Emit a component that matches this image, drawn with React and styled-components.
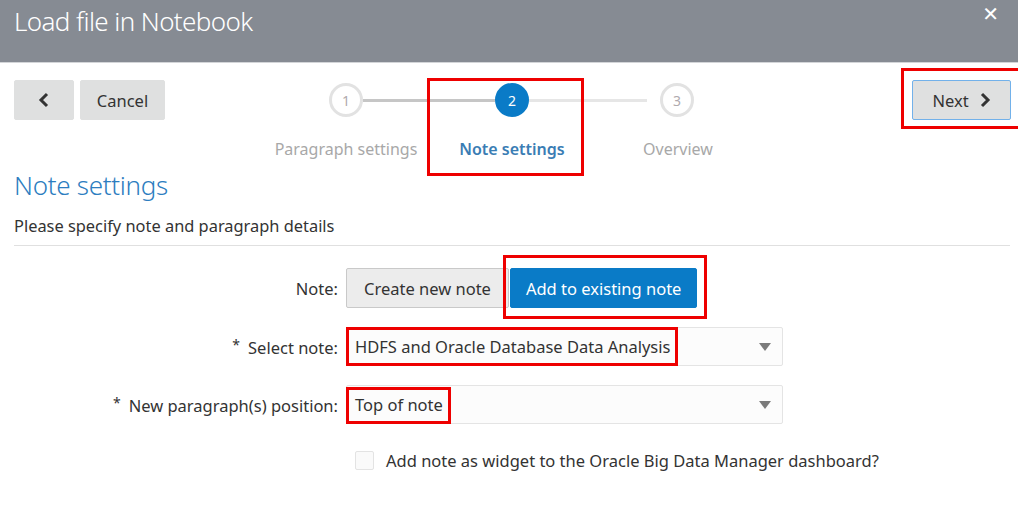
import React from "react";
import styled, { createGlobalStyle } from "styled-components";

const GlobalStyle = createGlobalStyle`
  html, body {
    margin: 0;
    padding: 0;
    background: #ffffff;
  }
  body {
    font-family: "Noto Sans", "Open Sans", Arial, sans-serif;
    color: #333333;
    width: 1018px;
    height: 513px;
    overflow: hidden;
  }
`;

const Dialog = styled.div`
  width: 1018px;
  height: 513px;
  background: #ffffff;
`;

const Header = styled.header`
  height: 63px;
  background: #868b93;
  border-bottom: 1px solid #d3d5d8;
  display: flex;
  align-items: flex-start;
  justify-content: space-between;
  padding: 3px 19px 0 14px;
  box-sizing: border-box;
`;

const Title = styled.h1`
  margin: 0;
  font-size: 26px;
  font-weight: 300;
  letter-spacing: -0.6px;
  color: #ffffff;
  line-height: 36px;
`;

const CloseButton = styled.span`
  color: #ffffff;
  font-size: 20px;
  font-weight: 700;
  line-height: 22px;
  font-family: "DejaVu Sans", sans-serif;
`;

const Toolbar = styled.div`
  display: grid;
  grid-template-columns: 1fr auto 1fr;
  align-items: start;
  margin-top: 17px;
`;

const ToolGroup = styled.div`
  display: flex;
  gap: 6px;
  padding: ${(p) => (p.$right ? "0 7px 0 0" : "0 0 0 14px")};
  justify-self: ${(p) => (p.$right ? "end" : "start")};
`;

const GreyButton = styled.button`
  position: relative;
  height: 40px;
  width: ${(p) => p.$w}px;
  display: flex;
  align-items: center;
  justify-content: center;
  gap: 10px;
  background: #dfe0e0;
  border: 1px solid ${(p) => (p.$focus ? "#72b1ea" : "#dfe0e0")};
  border-radius: 2px;
  font-family: inherit;
  font-size: 16.5px;
  color: #333333;
  padding: 0;
`;

const Stepper = styled.div`
  display: flex;
  flex-direction: column;
  margin-left: 6px;
`;

const Track = styled.div`
  display: flex;
  align-items: center;
  padding: 3px 0 0 66px;
  height: 34px;
`;

const Circle = styled.div`
  width: 34px;
  height: 34px;
  border-radius: 50%;
  box-sizing: border-box;
  border: 3px solid ${(p) => (p.$active ? "#0a7bc7" : "#e2e2e2")};
  background: ${(p) => (p.$active ? "#0a7bc7" : "#ffffff")};
  color: ${(p) => (p.$active ? "#ffffff" : "#b0aaae")};
  font-size: 14px;
  display: flex;
  align-items: center;
  justify-content: center;
  flex-shrink: 0;
`;

const Connector = styled.div`
  height: 3px;
  width: ${(p) => p.$w}px;
  margin-right: ${(p) => p.$gap || 0}px;
  background: ${(p) => (p.$done ? "#c6c6c6" : "#e6e6e6")};
`;

const Labels = styled.div`
  display: flex;
`;

const StepLabel = styled.div`
  position: relative;
  width: 166px;
  text-align: center;
  font-size: 16px;
  margin-top: 21px;
  font-weight: ${(p) => (p.$active ? 600 : 400)};
  color: ${(p) => (p.$active ? "#3a7db4" : "#a8a8a8")};
`;

const Annotation = styled.span`
  position: absolute;
  top: ${(p) => p.$t}px;
  left: ${(p) => p.$l}px;
  right: ${(p) => p.$r}px;
  bottom: ${(p) => p.$b}px;
  border: 3px solid #ee0000;
  pointer-events: none;
`;

const Body = styled.main`
  padding: 0 8px 0 14px;
`;

const Heading = styled.h2`
  margin: 8px 0 0 0;
  font-size: 26px;
  font-weight: 300;
  letter-spacing: -0.3px;
  color: #2c7dc0;
  line-height: 34px;
`;

const Subtitle = styled.p`
  margin: 12px 0 0 0;
  font-size: 16.4px;
  line-height: 24px;
  color: #333333;
  padding-bottom: 7px;
  border-bottom: 1px solid #e0e0e0;
`;

const Form = styled.div`
  display: grid;
  grid-template-columns: 324px 437px;
  column-gap: 8px;
  row-gap: 19px;
  align-items: center;
  margin-top: 22px;
`;

const Label = styled.label`
  text-align: right;
  font-size: 16.5px;
  color: #333333;
`;

const Required = styled.span`
  font-size: 14px;
  vertical-align: 4px;
  margin-right: 8px;
`;

const ButtonSet = styled.div`
  display: flex;
  gap: 1px;
`;

const ToggleButton = styled.button`
  position: relative;
  height: 40px;
  padding: 0 ${(p) => (p.$selected ? 15 : 17)}px;
  border-radius: 2px;
  font-family: inherit;
  font-size: 16.5px;
  border: 1px solid ${(p) => (p.$selected ? "#0a7bc7" : "#c9c9c9")};
  background: ${(p) => (p.$selected ? "#0a7bc7" : "#ececec")};
  color: ${(p) => (p.$selected ? "#ffffff" : "#333333")};
`;

const SelectBox = styled.div`
  height: 39px;
  box-sizing: border-box;
  border: 1px solid #e4e4e4;
  border-radius: 2px;
  background: #fcfcfc;
  display: flex;
  align-items: center;
  justify-content: space-between;
  padding: 0 11px 0 8px;
`;

const SelectValue = styled.span`
  position: relative;
  font-size: 16.5px;
  color: #333333;
`;

const CheckRow = styled.div`
  grid-column: 2 / span 1;
  display: flex;
  align-items: center;
  gap: 12px;
  padding-left: 9px;
  margin-top: 6px;
  white-space: nowrap;
`;

const CheckBox = styled.span`
  width: 19px;
  height: 19px;
  box-sizing: border-box;
  border: 1px solid #e3e3e3;
  border-radius: 2px;
  background: #fafafa;
  flex-shrink: 0;
`;

const CheckLabel = styled.span`
  font-size: 16.5px;
  color: #333333;
`;

const Chevron = ({ dir = "left" }) => (
  <svg width="12" height="16" viewBox="0 0 12 16">
    <path
      d={dir === "left" ? "M9 2 L3 8 L9 14" : "M3 2 L9 8 L3 14"}
      fill="none"
      stroke="#333"
      strokeWidth="3"
    />
  </svg>
);

const Caret = () => (
  <svg width="12" height="8" viewBox="0 0 12 8">
    <path d="M0 0 H12 L6 8 Z" fill="#7b7b7b" />
  </svg>
);

const steps = ["Paragraph settings", "Note settings", "Overview"];

export default function App() {
  return (
    <Dialog>
      <GlobalStyle />
      <Header>
        <Title>Load file in Notebook</Title>
        <CloseButton>✕</CloseButton>
      </Header>

      <Toolbar>
        <ToolGroup>
          <GreyButton $w={60}>
            <Chevron />
          </GreyButton>
          <GreyButton $w={85}>Cancel</GreyButton>
        </ToolGroup>

        <Stepper>
          <Track>
            <Circle>1</Circle>
            <Connector $w={132} $done />
            <Circle $active>2</Circle>
            <Connector $w={118} $gap={13} />
            <Circle>3</Circle>
          </Track>
          <Labels>
            {steps.map((s, i) => (
              <StepLabel key={s} $active={i === 1}>
                {s}
                {i === 1 && <Annotation $t={-60} $l={-2} $r={11} $b={-16} />}
              </StepLabel>
            ))}
          </Labels>
        </Stepper>

        <ToolGroup $right>
          <GreyButton $w={99} $focus>
            Next
            <Chevron dir="right" />
            <Annotation $t={-13} $l={-12} $r={-11} $b={-10} />
          </GreyButton>
        </ToolGroup>
      </Toolbar>

      <Body>
        <Heading>Note settings</Heading>
        <Subtitle>Please specify note and paragraph details</Subtitle>

        <Form>
          <Label>Note:</Label>
          <ButtonSet>
            <ToggleButton>Create new note</ToggleButton>
            <ToggleButton $selected>
              Add to existing note
              <Annotation $t={-14} $l={-8} $r={-11} $b={-12} />
            </ToggleButton>
          </ButtonSet>

          <Label>
            <Required>*</Required>Select note:
          </Label>
          <SelectBox>
            <SelectValue>
              HDFS and Oracle Database Data Analysis
              <Annotation $t={-8} $l={-9} $r={-8} $b={-8} />
            </SelectValue>
            <Caret />
          </SelectBox>

          <Label>
            <Required>*</Required>New paragraph(s) position:
          </Label>
          <SelectBox>
            <SelectValue>
              Top of note
              <Annotation $t={-6} $l={-9} $r={-8} $b={-8} />
            </SelectValue>
            <Caret />
          </SelectBox>

          <CheckRow>
            <CheckBox />
            <CheckLabel>
              Add note as widget to the Oracle Big Data Manager dashboard?
            </CheckLabel>
          </CheckRow>
        </Form>
      </Body>
    </Dialog>
  );
}
